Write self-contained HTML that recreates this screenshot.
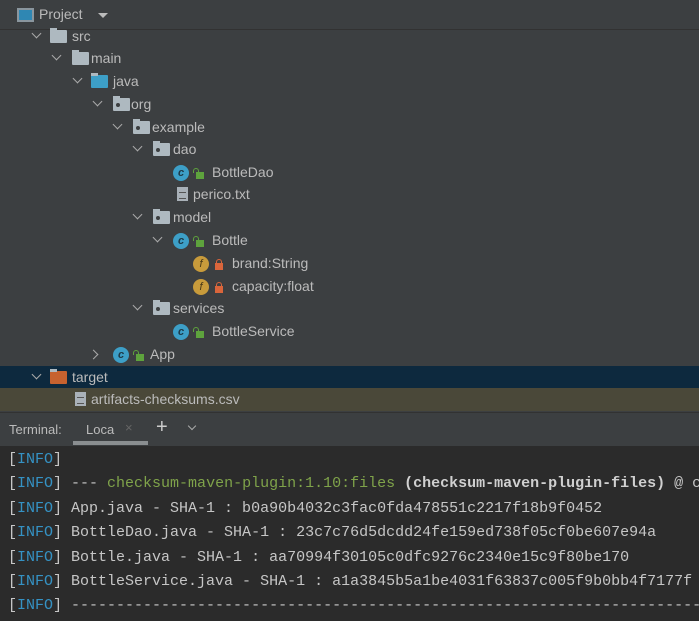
<!DOCTYPE html>
<html><head><meta charset="utf-8"><style>
*{margin:0;padding:0;box-sizing:border-box}
body{width:699px;height:621px;overflow:hidden;background:#3c3f41;font-family:"Liberation Sans",sans-serif;position:relative}
.hdr{position:absolute;left:0;top:0;width:699px;height:30px;border-bottom:1px solid #323232}
.row{position:absolute;left:0;width:699px;height:23px;color:#bbbbbb;font-size:14px;line-height:23px}
.row span{position:absolute;top:0}
.chev{position:absolute;width:7px;height:7px;border-right:1.6px solid #aaa;border-bottom:1.6px solid #aaa;transform:rotate(45deg);top:5px}
.chevr{transform:rotate(-45deg);top:8px}
.fold{position:absolute;width:17px;height:13px;background:#aeb9c0;top:5px;border-radius:1px}
.fold:before{content:"";position:absolute;left:0;top:-2px;width:7px;height:3px;background:#aeb9c0}
.pk:after{content:"";position:absolute;left:3px;top:5px;width:4px;height:4px;border-radius:2px;background:#3c3f41}
.cls{position:absolute;width:16px;height:16px;border-radius:8px;background:#3d9fc7;top:4px;color:#1d3a48;font-size:11px;line-height:16px;text-align:center;font-weight:bold}
.fld{position:absolute;width:16px;height:16px;border-radius:8px;background:#c89b3b;top:4px;color:#4a3a18;font-size:11px;line-height:16px;text-align:center}
.lockg{position:absolute;width:8px;height:7px;background:#5ea33d;top:11px}
.lockg:before{content:"";position:absolute;left:-3px;top:-4px;width:4px;height:4px;border:1.5px solid #5ea33d;border-bottom:none;border-radius:3px 3px 0 0}
.lockr{position:absolute;width:8px;height:7px;background:#d9653b;top:11px}
.lockr:before{content:"";position:absolute;left:1px;top:-4px;width:4px;height:4px;border:1.5px solid #d9653b;border-bottom:none;border-radius:3px 3px 0 0}
.file{position:absolute;width:11px;height:14px;background:#a9b1b8;top:4px}
.file:after{content:"";position:absolute;left:2px;top:5px;width:7px;height:5px;border-top:1px solid #555;border-bottom:1px solid #555}
.term{position:absolute;left:0;top:446px;width:699px;height:175px;background:#2b2b2b;font-family:"Liberation Mono",monospace;font-size:15px;color:#c6c6c6;padding-top:2px}
.term div{height:24.4px;line-height:24.4px;padding-left:8px;white-space:pre}
.b{color:#3592c4}.g{color:#7fa34a}.w{color:#d0d0d0;font-weight:bold}
</style></head><body>
<div class="hdr">
 <div style="position:absolute;left:17px;top:8px;width:17px;height:14px;border:2px solid #8a969e;background:#2f87b3"></div>
 <span style="position:absolute;left:39px;top:6px;color:#bbb;font-size:14px">Project</span>
 <div style="position:absolute;left:98px;top:13px;border-left:5px solid transparent;border-right:5px solid transparent;border-top:5px solid #bbb"></div>
</div>

<div class="row" style="top:25px"><i class="chev" style="left:33px"></i><i class="fold" style="left:50px"></i><span style="left:72px">src</span></div>
<div class="row" style="top:47px"><i class="chev" style="left:53px"></i><i class="fold" style="left:72px"></i><span style="left:91px">main</span></div>
<div class="row" style="top:70px"><i class="chev" style="left:74px"></i><i class="fold" style="left:91px;background:#3d9fc7"></i><span style="left:113px">java</span></div>
<div class="row" style="top:93px"><i class="chev" style="left:94px"></i><i class="fold pk" style="left:113px"></i><span style="left:131px">org</span></div>
<div class="row" style="top:116px"><i class="chev" style="left:114px"></i><i class="fold pk" style="left:133px"></i><span style="left:152px">example</span></div>
<div class="row" style="top:138px"><i class="chev" style="left:134px"></i><i class="fold pk" style="left:153px"></i><span style="left:173px">dao</span></div>
<div class="row" style="top:161px"><i class="cls" style="left:173px">c</i><i class="lockg" style="left:196px"></i><span style="left:212px">BottleDao</span></div>
<div class="row" style="top:183px"><i class="file" style="left:177px"></i><span style="left:193px">perico.txt</span></div>
<div class="row" style="top:206px"><i class="chev" style="left:134px"></i><i class="fold pk" style="left:153px"></i><span style="left:173px">model</span></div>
<div class="row" style="top:229px"><i class="chev" style="left:154px"></i><i class="cls" style="left:173px">c</i><i class="lockg" style="left:196px"></i><span style="left:212px">Bottle</span></div>
<div class="row" style="top:252px"><i class="fld" style="left:193px">f</i><i class="lockr" style="left:215px"></i><span style="left:232px">brand:String</span></div>
<div class="row" style="top:275px"><i class="fld" style="left:193px">f</i><i class="lockr" style="left:215px"></i><span style="left:232px">capacity:float</span></div>
<div class="row" style="top:297px"><i class="chev" style="left:134px"></i><i class="fold pk" style="left:153px"></i><span style="left:173px">services</span></div>
<div class="row" style="top:320px"><i class="cls" style="left:173px">c</i><i class="lockg" style="left:196px"></i><span style="left:212px">BottleService</span></div>
<div class="row" style="top:343px"><i class="chev chevr" style="left:90px"></i><i class="cls" style="left:113px">c</i><i class="lockg" style="left:136px"></i><span style="left:150px">App</span></div>
<div class="row" style="top:366px;background:#0d293e"><i class="chev" style="left:33px"></i><i class="fold" style="left:50px;background:#c7622f"></i><span style="left:72px">target</span></div>
<div class="row" style="top:388px;background:#4a4839"><i class="file" style="left:75px"></i><span style="left:91px">artifacts-checksums.csv</span></div>

<div style="position:absolute;left:0;top:412px;width:699px;height:1px;background:#323232"></div>
<span style="position:absolute;left:9px;top:422px;color:#bbb;font-size:13px">Terminal:</span>
<span style="position:absolute;left:86px;top:422px;color:#bbb;font-size:13px">Loca</span>
<span style="position:absolute;left:125px;top:420px;color:#666;font-size:13px">×</span>
<span style="position:absolute;left:156px;top:416px;color:#ccc;font-size:20px">+</span>
<i class="chev" style="left:189px;top:423px;width:6px;height:6px;position:absolute"></i>
<div style="position:absolute;left:73px;top:441px;width:75px;height:4px;background:#8a8e90"></div>

<div class="term">
<div>[<span class="b">INFO</span>]</div>
<div>[<span class="b">INFO</span>] --- <span class="g">checksum-maven-plugin:1.10:files</span> <span class="w">(checksum-maven-plugin-files)</span> @ c</div>
<div>[<span class="b">INFO</span>] App.java - SHA-1 : b0a90b4032c3fac0fda478551c2217f18b9f0452</div>
<div>[<span class="b">INFO</span>] BottleDao.java - SHA-1 : 23c7c76d5dcdd24fe159ed738f05cf0be607e94a</div>
<div>[<span class="b">INFO</span>] Bottle.java - SHA-1 : aa70994f30105c0dfc9276c2340e15c9f80be170</div>
<div>[<span class="b">INFO</span>] BottleService.java - SHA-1 : a1a3845b5a1be4031f63837c005f9b0bb4f7177f</div>
<div>[<span class="b">INFO</span>] ------------------------------------------------------------------------</div>
</div>
</body></html>
